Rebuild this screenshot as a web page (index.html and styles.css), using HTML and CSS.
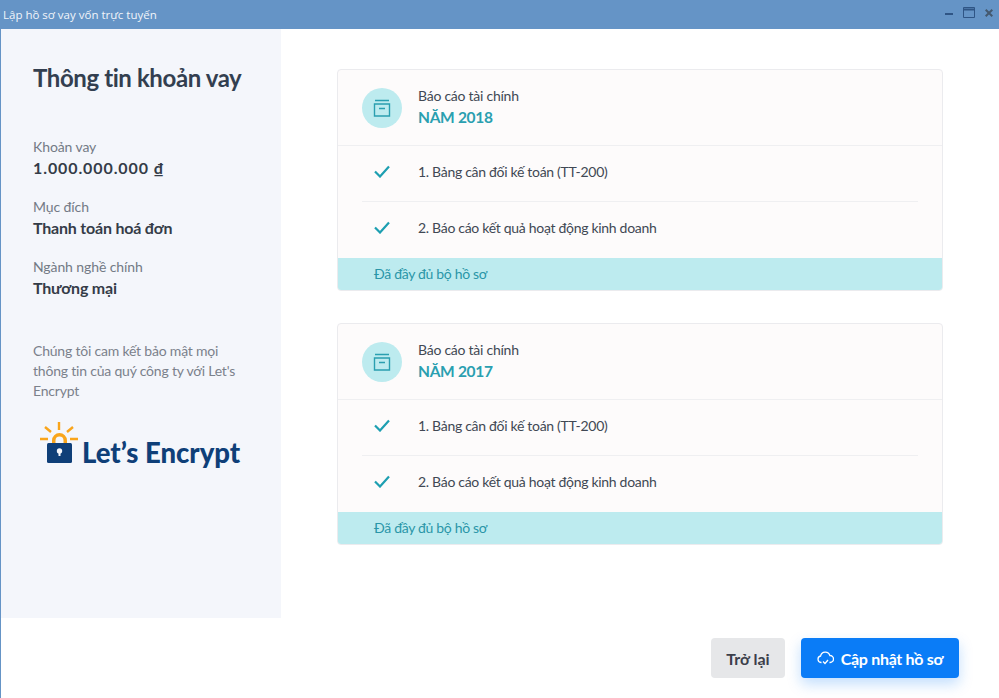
FILE: index.html
```html
<!DOCTYPE html>
<html lang="vi">
<head>
    <meta charset="UTF-8">
    <meta name="viewport" content="width=device-width, initial-scale=1.0">
    <title>Lập hồ sơ vay vốn trực tuyến</title>
    <link rel="stylesheet" href="styles.css">
</head>
<body>
<div class="window">
    <div class="titlebar">
        <span class="titlebar-text">Lập hồ sơ vay vốn trực tuyến</span>
        <div class="win-controls">
            <svg width="8" height="10" viewBox="0 0 8 10"><path d="M0 6h8" stroke="#2f5585" stroke-width="2"/></svg>
            <svg width="12" height="11" viewBox="0 0 12 11"><path d="M.5.5h11v10H.5z" fill="none" stroke="#2f5585"/><path d="M0 2.5h12" stroke="#2f5585" stroke-width="2"/></svg>
            <svg width="8" height="8" viewBox="0 0 8 8"><path d="M.7.7l6.600 6.600M7.300.7L.7 7.300" stroke="#44596f" stroke-width="2"/></svg>
        </div>
    </div>

    <div class="main">
        <aside class="sidebar">
            <h1>Thông tin khoản vay</h1>
            <div class="info">
                <div class="info-label">Khoản vay</div>
                <div class="info-value info-amount">1.000.000.000 ₫</div>
            </div>
            <div class="info">
                <div class="info-label">Mục đích</div>
                <div class="info-value">Thanh toán hoá đơn</div>
            </div>
            <div class="info">
                <div class="info-label">Ngành nghề chính</div>
                <div class="info-value">Thương mại</div>
            </div>
            <p class="security-note">Chúng tôi cam kết bảo mật mọi thông tin của quý công ty với Let's Encrypt</p>
            <div class="le-logo">
                <svg width="42" height="44" viewBox="0 0 42 44">
                    <g stroke="#f9a51b" stroke-width="2.400" fill="none">
                        <path d="M19 1v8M5 6l6 5M33 6l-6 5M0 18h8M30 18h8"/>
                        <path d="M13.750 23v-3.500a5.750 5.750 0 0 1 11.500 0V23" stroke-width="3.500"/>
                    </g>
                    <rect x="7" y="22" width="25" height="20" rx="1.500" fill="#0f3f78"/>
                    <circle cx="19.500" cy="30" r="2.700" fill="#f4f6fb"/>
                    <path d="M18.500 31h2v4h-2z" fill="#f4f6fb"/>
                </svg>
                <span class="le-text">Let’s Encrypt</span>
            </div>
        </aside>

        <section class="content">
            <div class="card">
                <div class="card-head">
                    <div class="card-icon">
                        <svg width="18" height="18" viewBox="0 0 18 18" fill="none" stroke="#2a9fb0" stroke-width="1.400"><path d="M2 1.500h14M1.500 5h15v12h-15zM6 9.500h6"/></svg>
                    </div>
                    <div>
                        <div class="card-label">Báo cáo tài chính</div>
                        <div class="card-year">NĂM 2018</div>
                    </div>
                </div>
                <div class="doc-list">
                    <div class="doc-row">
                        <svg class="check" width="16" height="13" viewBox="0 0 16 13" fill="none"><path d="M1 6.500l5 5 9-10" stroke="#1d9fb1" stroke-width="2.200"/></svg>
                        <span>1. Bảng cân đối kế toán (TT-200)</span>
                    </div>
                    <div class="doc-row">
                        <svg class="check" width="16" height="13" viewBox="0 0 16 13" fill="none"><path d="M1 6.500l5 5 9-10" stroke="#1d9fb1" stroke-width="2.200"/></svg>
                        <span>2. Báo cáo kết quả hoạt động kinh doanh</span>
                    </div>
                </div>
                <div class="card-status">Đã đầy đủ bộ hồ sơ</div>
            </div>

            <div class="card">
                <div class="card-head">
                    <div class="card-icon">
                        <svg width="18" height="18" viewBox="0 0 18 18" fill="none" stroke="#2a9fb0" stroke-width="1.400"><path d="M2 1.500h14M1.500 5h15v12h-15zM6 9.500h6"/></svg>
                    </div>
                    <div>
                        <div class="card-label">Báo cáo tài chính</div>
                        <div class="card-year">NĂM 2017</div>
                    </div>
                </div>
                <div class="doc-list">
                    <div class="doc-row">
                        <svg class="check" width="16" height="13" viewBox="0 0 16 13" fill="none"><path d="M1 6.500l5 5 9-10" stroke="#1d9fb1" stroke-width="2.200"/></svg>
                        <span>1. Bảng cân đối kế toán (TT-200)</span>
                    </div>
                    <div class="doc-row">
                        <svg class="check" width="16" height="13" viewBox="0 0 16 13" fill="none"><path d="M1 6.500l5 5 9-10" stroke="#1d9fb1" stroke-width="2.200"/></svg>
                        <span>2. Báo cáo kết quả hoạt động kinh doanh</span>
                    </div>
                </div>
                <div class="card-status">Đã đầy đủ bộ hồ sơ</div>
            </div>
        </section>
    </div>

    <div class="footer">
        <button class="btn btn-back">Trở lại</button>
        <button class="btn btn-update">
            <svg width="17" height="14" viewBox="0 0 17 14" fill="none" stroke="#fff" stroke-width="1.300"><path d="M4.500 11.500H4a3.300 3.300 0 0 1-.4-6.500 4.800 4.800 0 0 1 9.300-.5 3.500 3.500 0 0 1 .2 7h-.6"/><path d="M6 10.500l2 2 3-3.500"/></svg>
            Cập nhật hồ sơ
        </button>
    </div>
</div>
</body>
</html>
```

FILE: styles.css
```css
* { box-sizing: border-box; }
body {
    margin: 0;
    font-family: Lato, "Open Sans", sans-serif;
    color: #333a4a;
    background: #fff;
}
.window {
    width: 999px;
    height: 698px;
    display: flex;
    flex-direction: column;
    overflow: hidden;
    border-left: 1px solid #6594c6;
}
.titlebar {
    height: 29px;
    flex: none;
    margin-left: -1px;
    background: #6594c6;
    color: #f1f5fa;
    display: flex;
    align-items: center;
    justify-content: space-between;
    padding: 0 6px 0 3px;
    font-family: "Open Sans", sans-serif;
    font-size: 11.5px;
}
.win-controls { display: flex; align-items: center; gap: 10px; margin-top: -4px; }
.main { flex: 1; display: flex; min-height: 0; }

.sidebar {
    width: 280px;
    flex: none;
    background: #f4f6fb;
    padding: 33px 20px 0 32px;
}
.sidebar h1 {
    margin: 0 0 42px;
    font-size: 24px;
    line-height: 32px;
    font-weight: 700;
    letter-spacing: -.4px;
    color: #333f50;
}
.info { margin-bottom: 17px; }
.info-label { font-size: 14px; line-height: 21px; letter-spacing: -.1px; color: #737a85; }
.info-value { font-size: 16px; line-height: 22px; font-weight: 700; letter-spacing: -.2px; color: #343c48; }
.info-amount { letter-spacing: .9px; }
.security-note {
    margin: 42px 0 0;
    max-width: 212px;
    font-size: 14px;
    line-height: 20px;
    letter-spacing: -.2px;
    color: #7b818b;
}
.le-logo { display: flex; align-items: flex-end; margin: 18px 0 0 7px; height: 46px; }
.le-text {
    font-size: 27.5px;
    line-height: 24px;
    font-weight: 900;
    color: #0f3f78;
    white-space: nowrap;
}

.content {
    flex: 1;
    padding: 40px 56px 0;
    display: flex;
    flex-direction: column;
    gap: 32px;
}
.card {
    height: 222px;
    background: #fdfbfb;
    border: 1px solid #ebebee;
    border-radius: 4px;
    overflow: hidden;
    display: flex;
    flex-direction: column;
}
.card-head {
    height: 76px;
    flex: none;
    display: flex;
    align-items: center;
    gap: 16px;
    padding: 0 24px;
    border-bottom: 1px solid #efeff1;
}
.card-icon {
    width: 40px;
    height: 40px;
    border-radius: 50%;
    background: #bdebef;
    display: flex;
    align-items: center;
    justify-content: center;
}
.card-label { font-size: 14px; line-height: 20px; letter-spacing: -.25px; color: #414854; margin-top: -2px; }
.card-year { font-size: 15.5px; line-height: 22px; font-weight: 700; letter-spacing: -.3px; color: #2a9fb0; }
.doc-list { flex: 1; padding: 0 24px; }
.doc-row {
    height: 55px;
    padding-bottom: 4px;
    display: flex;
    align-items: center;
    font-size: 14px;
    letter-spacing: -.3px;
    color: #414854;
}
.doc-row + .doc-row { height: 57px; padding-bottom: 5px; border-top: 1px solid #efeff1; }
.check { margin: 0 28px 0 12px; flex: none; }
.card-status {
    height: 32px;
    flex: none;
    background: #bdebef;
    color: #2a96a8;
    font-size: 14px;
    line-height: 32px;
    letter-spacing: -.33px;
    padding-left: 36px;
}

.footer {
    height: 80px;
    flex: none;
    background: #fff;
    display: flex;
    justify-content: flex-end;
    align-items: flex-start;
    gap: 16px;
    padding: 20px 40px 0 0;
}
.btn {
    height: 40px;
    border: none;
    border-radius: 4px;
    font-family: inherit;
    font-size: 16px;
    font-weight: 700;
    display: flex;
    align-items: center;
    justify-content: center;
}
.btn-back { width: 74px; background: #e6e7e9; color: #3c3f4b; }
.btn-update {
    width: 158px;
    gap: 7px;
    letter-spacing: -.3px;
    background: #0a7cf7;
    color: #fff;
    box-shadow: 0 6px 14px rgba(10, 124, 247, .25);
}
```
